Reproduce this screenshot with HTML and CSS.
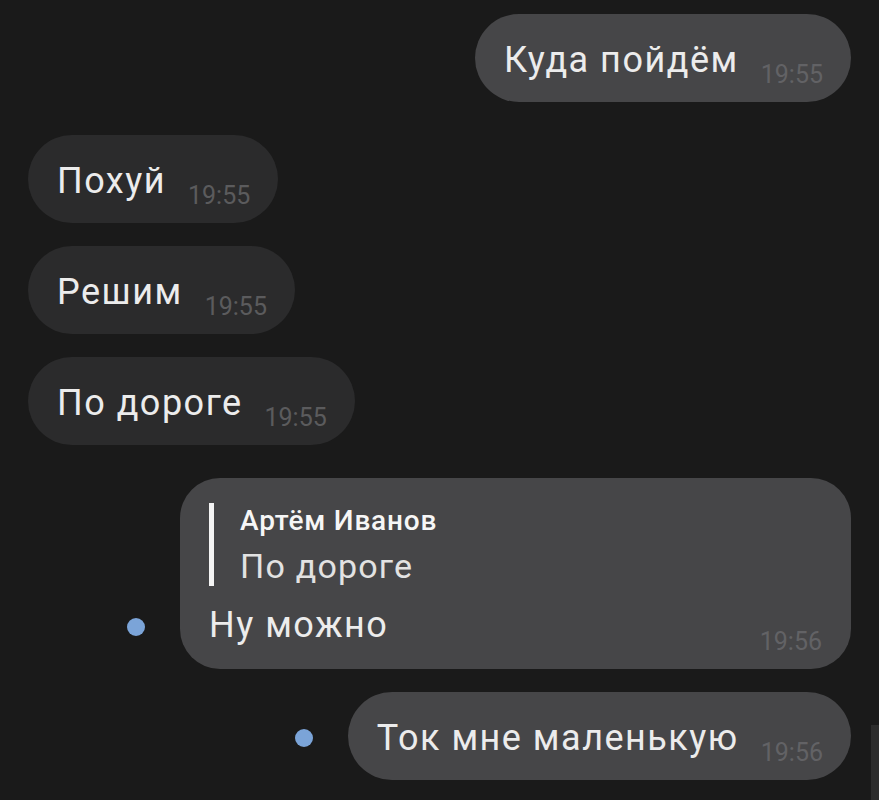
FILE: index.html
```html
<!DOCTYPE html>
<html lang="ru">
<head>
    <meta charset="UTF-8">
    <meta name="viewport" content="width=device-width, initial-scale=1.0">
    <title>Чат</title>
    <link rel="stylesheet" href="styles.css">
</head>
<body>

<div class="chat">
    <div class="row out">
        <div class="bubble out">
            <span class="msg-text">Куда пойдём</span>
            <span class="msg-time">19:55</span>
        </div>
    </div>

    <div class="row in group">
        <div class="bubble in">
            <span class="msg-text">Похуй</span>
            <span class="msg-time">19:55</span>
        </div>
    </div>
    <div class="row in">
        <div class="bubble in">
            <span class="msg-text">Решим</span>
            <span class="msg-time">19:55</span>
        </div>
    </div>
    <div class="row in">
        <div class="bubble in">
            <span class="msg-text">По дороге</span>
            <span class="msg-time">19:55</span>
        </div>
    </div>

    <div class="row out group">
        <span class="unread"></span>
        <div class="bubble out reply">
            <div class="quote">
                <div class="quote-name">Артём Иванов</div>
                <div class="quote-text">По дороге</div>
            </div>
            <div class="reply-body">
                <span class="msg-text">Ну можно</span>
                <span class="msg-time">19:56</span>
            </div>
        </div>
    </div>
    <div class="row out">
        <span class="unread"></span>
        <div class="bubble out">
            <span class="msg-text">Ток мне маленькую</span>
            <span class="msg-time">19:56</span>
        </div>
    </div>
</div>

<div class="scroll-thumb"></div>

</body>
</html>
```

FILE: styles.css
```css
html, body {
    height: 100%;
}
body {
    margin: 0;
    background-color: #1a1a1a;
    font-family: Roboto, "Noto Sans", sans-serif;
    color: #ececec;
    overflow: hidden;
}
.chat {
    display: flex;
    flex-direction: column;
    padding: 14px 28px;
}
.row {
    display: flex;
    align-items: flex-end;
    margin-top: 23px;
}
.row:first-child {
    margin-top: 0;
}
.row.group {
    margin-top: 33px;
}
.row.out {
    justify-content: flex-end;
    gap: 35px;
}
.row.in {
    justify-content: flex-start;
}
.bubble {
    display: flex;
    align-items: flex-end;
    box-sizing: border-box;
    padding: 26px 28px 22px 29px;
    border-radius: 44px;
    white-space: nowrap;
}
.bubble.out {
    background-color: #464648;
}
.bubble.in {
    background-color: #2b2b2c;
}
.msg-text {
    font-size: 36px;
    line-height: 40px;
    letter-spacing: 1.5px;
}
.msg-time {
    font-size: 25px;
    line-height: 24px;
    margin-left: 22px;
    margin-bottom: -7px;
    color: #626265;
}
.bubble.in .msg-time {
    color: #5b5b5d;
}
.unread {
    width: 18px;
    height: 18px;
    border-radius: 50%;
    background-color: #7ba4d8;
    margin-bottom: 33px;
}
.bubble.reply {
    flex-direction: column;
    align-items: stretch;
    width: 671px;
    padding: 25px 29px 24px 29px;
    border-radius: 40px;
}
.quote {
    border-left: 5px solid #f4f4f4;
    padding: 2px 0 0 26px;
}
.quote-name {
    font-size: 28px;
    line-height: 32px;
    font-weight: 500;
    letter-spacing: 0.8px;
    color: #f6f6f6;
}
.quote-text {
    font-size: 34px;
    line-height: 40px;
    letter-spacing: 1.2px;
    margin-top: 9px;
    color: #e2e2e2;
}
.reply-body {
    display: flex;
    align-items: flex-end;
    justify-content: space-between;
    margin-top: 19px;
}
.reply-body .msg-time {
    margin-bottom: -9px;
}
.scroll-thumb {
    position: absolute;
    right: 0;
    top: 725px;
    width: 8px;
    height: 75px;
    background-color: #2c2c2c;
}
```
